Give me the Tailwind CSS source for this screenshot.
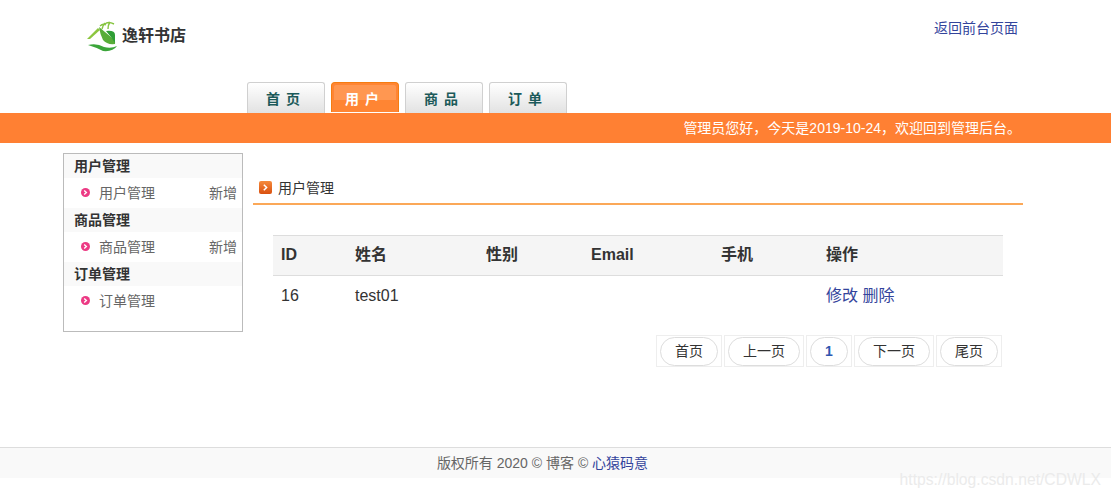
<!DOCTYPE html>
<html lang="zh">
<head>
<meta charset="utf-8">
<script src="https://cdn.jsdelivr.net/npm/@tailwindcss/browser@4"></script>
</head>
<body class="bg-white relative h-[498px] w-[1111px] overflow-hidden font-['Liberation_Sans','Noto_Sans_CJK_SC',sans-serif] text-[14px] text-[#333]">
<header class="h-[82px] flex justify-between pl-[87px] pr-[93px]">
  <div class="flex items-start pt-[20px] gap-[3px]">
    <svg width="32" height="32" viewBox="0 0 32 32">
      <path d="M0 19 L11 8 L13 10 L3 19Z" fill="#8cc63f"/>
      <path d="M12 7 L24 17 Q29 21 28 24 Q20 25 16 20 Q13 14 12 7Z" fill="#58ad38"/>
      <path d="M19 11 Q28 10 28 15 L28 23 L24 17Z" fill="#2f9e35"/>
      <path d="M15 9 Q16 5 18 3 M13 6 Q16 3 19 5 M21 9 Q21 5 23 2 M18 4 Q21 1 27 4" stroke="#86c440" stroke-width="1.4" fill="none"/>
      <path d="M1 25 Q10 23 17 27 Q24 29 30 26 Q26 32 16 31 Q8 27 1 25Z" fill="#3ba53a"/>
    </svg>
    <span class="font-bold text-[16px] leading-[32px] text-[#333]">逸轩书店</span>
  </div>
  <a class="text-[14px] text-[#33449c] pt-[18px] leading-[20px]">返回前台页面</a>
</header>
<nav class="h-[31px] flex gap-[6px] pl-[247px]">
  <a class="relative w-[78px] h-[31px] border border-b-0 border-[#d0d0d0] rounded-t-[3px] bg-gradient-to-b from-white to-[#e2e2e2] text-center font-bold text-[#1c5a5a] leading-[33px] tracking-[1px] pr-[5px]">首 页</a>
  <a class="relative w-[68px] h-[30px] border border-b-0 border-[#f57c10] rounded-t-[4px] bg-[#ff8533] text-center font-bold text-white leading-[32px] tracking-[1px] pr-[5px]"><span class="absolute left-[2px] right-[2px] top-[2px] h-[15px] bg-white/15 rounded-t-[2px]"></span><span class="relative">用 户</span></a>
  <a class="relative w-[78px] h-[31px] border border-b-0 border-[#d0d0d0] rounded-t-[3px] bg-gradient-to-b from-white to-[#e2e2e2] text-center font-bold text-[#1c5a5a] leading-[33px] tracking-[1px] pr-[5px]">商 品</a>
  <a class="relative w-[78px] h-[31px] border border-b-0 border-[#d0d0d0] rounded-t-[3px] bg-gradient-to-b from-white to-[#e2e2e2] text-center font-bold text-[#1c5a5a] leading-[33px] tracking-[1px] pr-[5px]">订 单</a>
</nav>
<div class="h-[30px] bg-[#ff8033] text-white text-right pr-[90px] leading-[30px]">管理员您好，今天是2019-10-24，欢迎回到管理后台。</div>
<div class="flex h-[304px] pt-[10px] pl-[63px]">
  <aside class="w-[180px] h-[179px] border border-[#bbb]">
    <h3 class="h-[24px] bg-[#f9f9f9] pl-[10px] font-bold leading-[24px] text-[#333]">用户管理</h3>
    <div class="h-[30px] flex justify-between items-center pl-[17px] pr-[5px] text-[#666]"><span class="flex items-center gap-[9px]"><svg class="mb-[2px]" width="9" height="9" viewBox="0 0 9 9"><circle cx="4.5" cy="4.5" r="4.5" fill="#ec3a84"/><path d="M3.2 2.4 L5.4 4.5 L3.2 6.6" stroke="#fff" stroke-width="1.4" fill="none"/></svg><span>用户管理</span></span><a>新增</a></div>
    <h3 class="h-[24px] bg-[#f9f9f9] pl-[10px] font-bold leading-[24px] text-[#333]">商品管理</h3>
    <div class="h-[30px] flex justify-between items-center pl-[17px] pr-[5px] text-[#666]"><span class="flex items-center gap-[9px]"><svg class="mb-[2px]" width="9" height="9" viewBox="0 0 9 9"><circle cx="4.5" cy="4.5" r="4.5" fill="#ec3a84"/><path d="M3.2 2.4 L5.4 4.5 L3.2 6.6" stroke="#fff" stroke-width="1.4" fill="none"/></svg><span>商品管理</span></span><a>新增</a></div>
    <h3 class="h-[24px] bg-[#f9f9f9] pl-[10px] font-bold leading-[24px] text-[#333]">订单管理</h3>
    <div class="h-[30px] flex justify-between items-center pl-[17px] pr-[5px] text-[#666]"><span class="flex items-center gap-[9px]"><svg class="mb-[2px]" width="9" height="9" viewBox="0 0 9 9"><circle cx="4.5" cy="4.5" r="4.5" fill="#ec3a84"/><path d="M3.2 2.4 L5.4 4.5 L3.2 6.6" stroke="#fff" stroke-width="1.4" fill="none"/></svg><span>订单管理</span></span></div>
  </aside>
  <main class="w-[770px] ml-[10px]">
    <div class="h-[52px] border-b-2 border-[#fba858] flex items-center gap-[6px] pl-[6px] pt-[21px] text-[#333]">
      <svg class="mb-[3px]" width="13" height="13" viewBox="0 0 13 13"><defs><linearGradient id="g" x1="0" y1="0" x2="0" y2="1"><stop offset="0" stop-color="#f58a3c"/><stop offset="1" stop-color="#d9500f"/></linearGradient></defs><rect width="13" height="13" rx="2" fill="url(#g)"/><path d="M4.8 3.8 L7.6 6.5 L4.8 9.2" stroke="#fff" stroke-width="1.5" fill="none"/></svg>
      <span class="text-[14px]">用户管理</span>
    </div>
    <div class="mx-[20px] mt-[30px] w-[730px]">
      <div class="grid grid-cols-[74px_131px_105px_130px_105px_177px] h-[41px] bg-[#f5f5f5] border-y border-[#ddd] pl-[8px] pb-[2px] items-center font-bold text-[16px] text-[#333]">
        <span>ID</span><span>姓名</span><span>性别</span><span>Email</span><span>手机</span><span>操作</span>
      </div>
      <div class="grid grid-cols-[74px_131px_105px_130px_105px_177px] h-[40px] pl-[8px] items-center text-[16px] text-[#333]">
        <span>16</span><span>test01</span><span></span><span></span><span></span><span class="text-[#33449c] whitespace-nowrap">修改 删除</span>
      </div>
      <div class="flex justify-end gap-[2px] mt-[19px] pr-px">
        <div class="h-[32px] border border-[#eee] px-[3px] pt-[1px]"><a class="block h-[29px] w-[58px] border border-[#ddd] rounded-full text-center leading-[26px] text-[14px] text-[#333]">首页</a></div>
        <div class="h-[32px] border border-[#eee] px-[3px] pt-[1px]"><a class="block h-[29px] w-[72px] border border-[#ddd] rounded-full text-center leading-[26px] text-[14px] text-[#333]">上一页</a></div>
        <div class="h-[32px] border border-[#eee] px-[3px] pt-[1px]"><a class="block h-[29px] w-[38px] border border-[#ddd] rounded-full text-center leading-[26px] text-[14px] font-bold text-[#2f57b0]">1</a></div>
        <div class="h-[32px] border border-[#eee] px-[3px] pt-[1px]"><a class="block h-[29px] w-[72px] border border-[#ddd] rounded-full text-center leading-[26px] text-[14px] text-[#333]">下一页</a></div>
        <div class="h-[32px] border border-[#eee] px-[3px] pt-[1px]"><a class="block h-[29px] w-[58px] border border-[#ddd] rounded-full text-center leading-[26px] text-[14px] text-[#333]">尾页</a></div>
      </div>
    </div>
  </main>
</div>
<footer class="h-[31px] border-t border-[#ddd] bg-[#f9f9f9] text-center leading-[31px] text-[14px] text-[#666] pr-[26px]">版权所有 2020 © 博客 © <a class="text-[#33449c]">心猿码意</a></footer>
<div class="absolute right-[10px] top-[470px] text-[15.7px] leading-[20px] text-[#ebebeb]">https://blog.csdn.net/CDWLX</div>
</body>
</html>
